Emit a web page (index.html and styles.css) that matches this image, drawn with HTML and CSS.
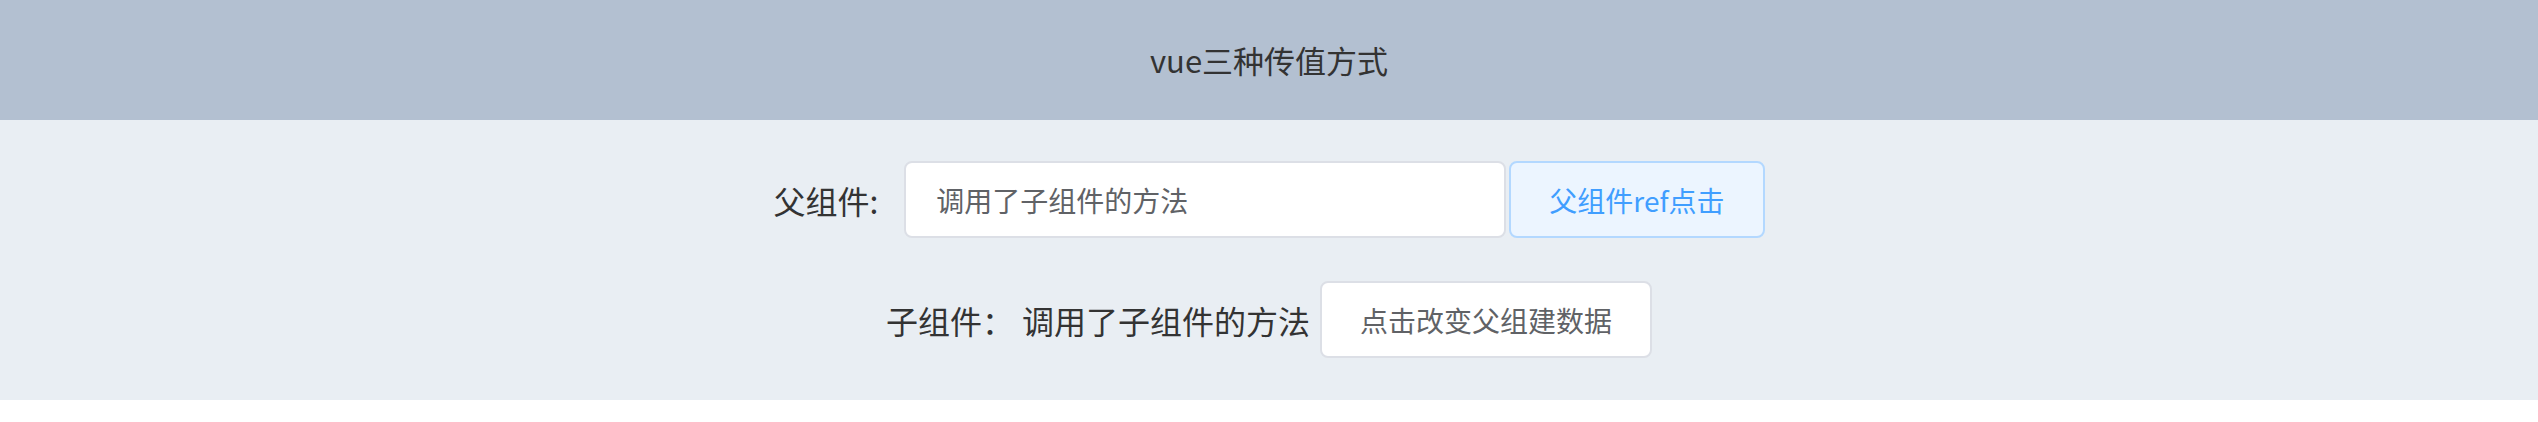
FILE: index.html
```html
<!DOCTYPE html>
<html lang="zh-CN">
<head>
    <meta charset="UTF-8">
    <title>vue三种传值方式</title>
    <link rel="stylesheet" href="styles.css">
</head>
<body>
    <header class="page-header">vue三种传值方式</header>

    <main class="page-main">
        <div class="parent-row">
            <span class="row-label">父组件:</span>
            <input class="text-input" type="text" value="调用了子组件的方法">
            <button class="btn btn-primary-plain">父组件ref点击</button>
        </div>
        <div class="child-row">
            <span class="row-label">子组件：</span>
            <span class="row-text">调用了子组件的方法</span>
            <button class="btn btn-default">点击改变父组建数据</button>
        </div>
    </main>
</body>
</html>
```

FILE: styles.css
```css
body {
    margin: 0;
    background-color: #ffffff;
    font-family: "Noto Sans CJK SC", "Noto Sans", sans-serif;
    color: #333333;
}

.page-header {
    height: 120px;
    line-height: 120px;
    text-align: center;
    background-color: #b3c0d1;
    font-size: 31px;
    color: #333333;
}

.page-main {
    height: 280px;
    background-color: #e9eef3;
    display: flex;
    flex-direction: column;
    align-items: center;
    padding-top: 41px;
    box-sizing: border-box;
    gap: 43px;
}

.parent-row,
.child-row {
    display: flex;
    align-items: center;
    font-size: 32px;
}

.parent-row .row-label {
    margin-right: 26px;
}

.child-row .row-label {
    margin-right: 8px;
}

.child-row .row-text {
    margin-right: 10px;
}

.text-input {
    width: 602px;
    height: 77px;
    box-sizing: border-box;
    padding: 0 30px;
    border: 2px solid #dcdfe6;
    border-radius: 8px;
    font-family: inherit;
    font-size: 28px;
    color: #606266;
    background-color: #ffffff;
    outline: none;
    margin-right: 3px;
}

.btn {
    height: 77px;
    box-sizing: border-box;
    padding: 0 38px;
    border-radius: 8px;
    font-family: inherit;
    font-size: 28px;
    cursor: pointer;
}

.btn-primary-plain {
    background-color: #ecf5ff;
    border: 2px solid #b3d8ff;
    color: #409eff;
}

.btn-default {
    background-color: #ffffff;
    border: 2px solid #dcdfe6;
    color: #606266;
}
```
